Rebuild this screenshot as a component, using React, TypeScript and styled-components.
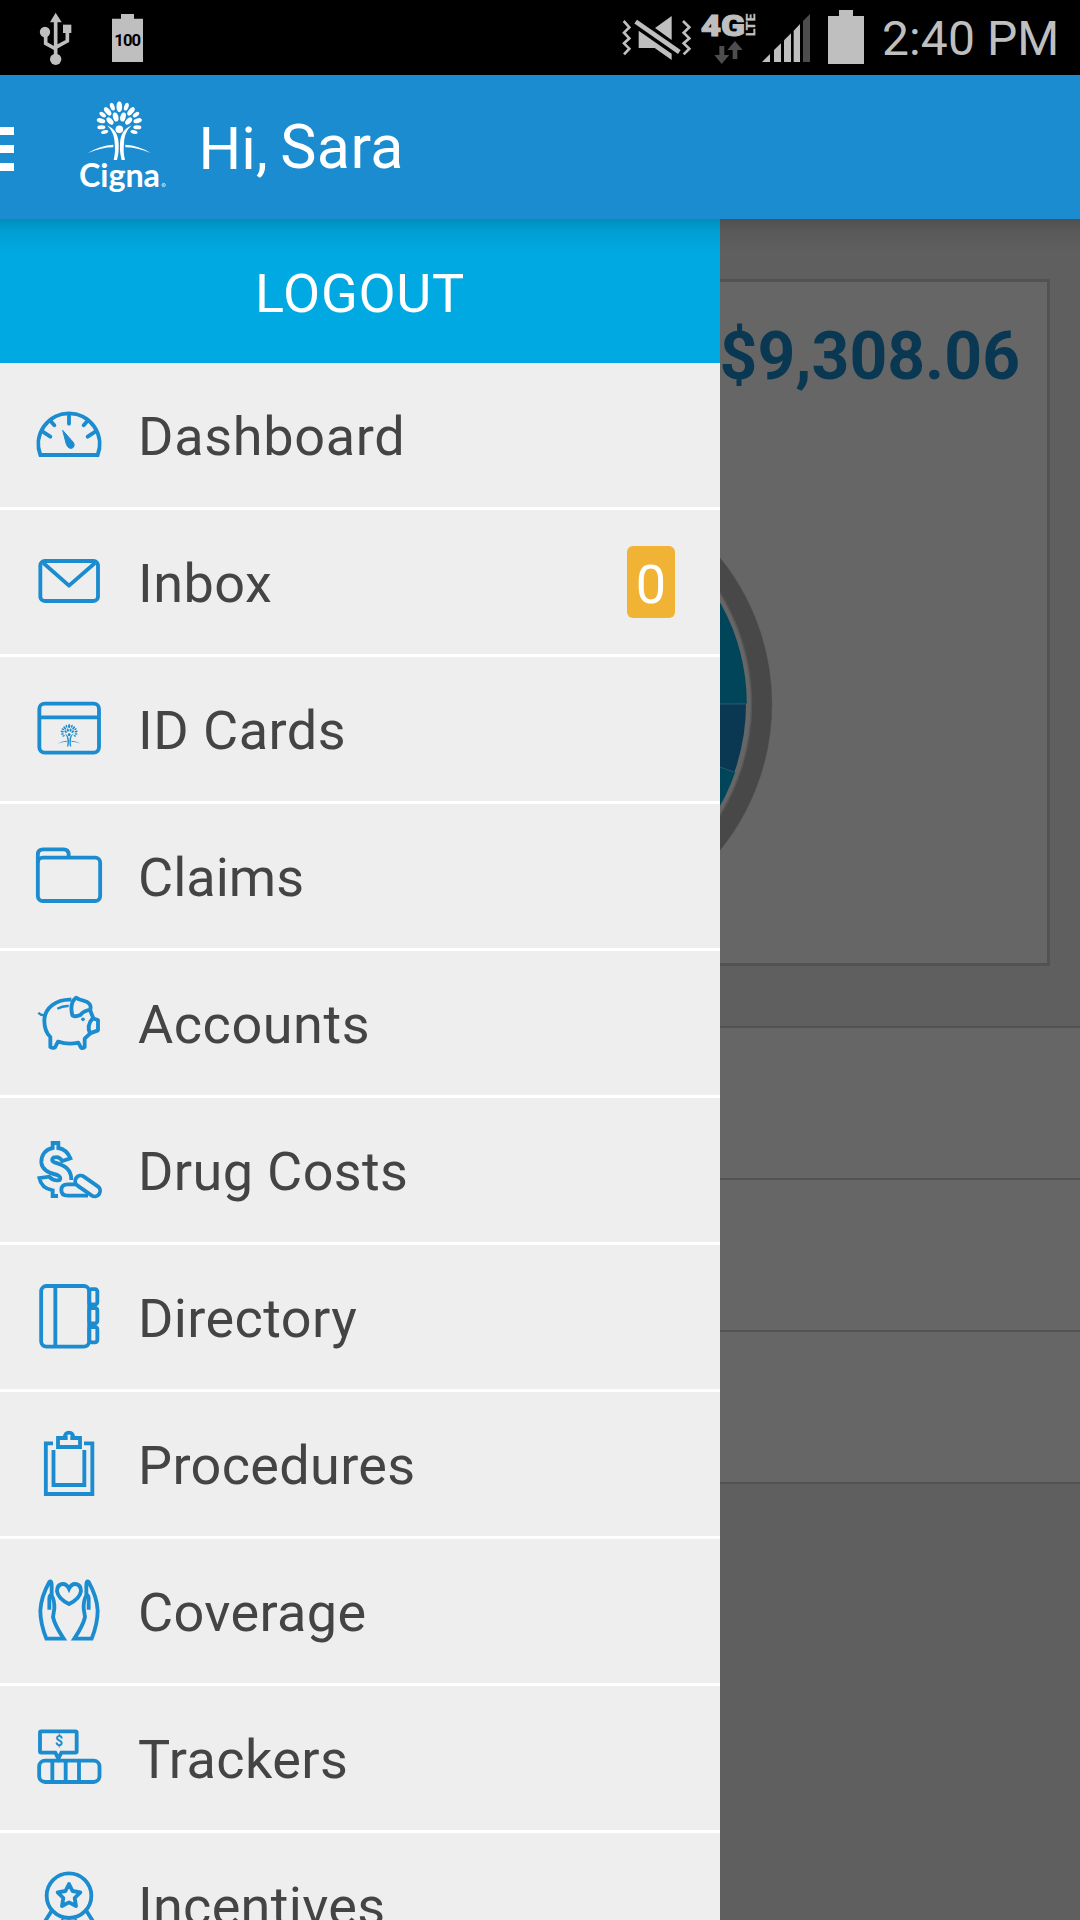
import React from 'react';
import styled, { createGlobalStyle } from 'styled-components';

const GlobalStyle = createGlobalStyle`
  * { box-sizing: border-box; }
  html, body { margin: 0; padding: 0; }
  body { font-family: Roboto, "Noto Sans", sans-serif; background: #000; }
`;

const BLUE = '#1a8ccf';
const GREY = '#bfbfbf';

const Screen = styled.div`
  width: 1080px;
  height: 1920px;
  display: flex;
  flex-direction: column;
  overflow: hidden;
`;

/* ---------- status bar ---------- */

const StatusBar = styled.div`
  flex: none;
  height: 75px;
  padding: 0 22px 0 39px;
  display: flex;
  justify-content: space-between;
  background: #000;
`;

const StatusGroup = styled.div<{ $gap: number }>`
  display: flex;
  gap: ${(p) => p.$gap}px;
`;

const StatusSvg = styled.svg<{ $before?: number }>`
  display: block;
  height: 75px;
  flex: none;
  overflow: visible;
  margin-left: ${(p) => p.$before ?? 0}px;
`;

const Clock = styled.span`
  width: 176px;
  margin-left: 18px;
  font-size: 48px;
  letter-spacing: 0.1px;
  line-height: 75px;
  padding-top: 1px;
  white-space: nowrap;
  color: ${GREY};
`;

const UsbIcon = () => (
  <StatusSvg width={34} viewBox="117 0 102 225" fill={GREY} stroke="none">
    <path d="M167 38 L185 67 H150 Z" />
    <circle cx="135" cy="96" r="15.5" />
    <rect x="189" y="74" width="25" height="25" />
    <circle cx="167" cy="178" r="17" />
    <path d="M167 60 V170 M137 100 V130 L167 147 M202 95 V123 L167 142" fill="none" stroke={GREY} strokeWidth="11" />
  </StatusSvg>
);

const BatteryLevelIcon = () => (
  <StatusSvg width={32} viewBox="336 0 96 225" fill={GREY}>
    <path d="M336 56 H363 V42 H402 V56 H429 V186 H336 Z" />
    <text x="383" y="138" fill="#000" fontSize="50" fontWeight="700" textAnchor="middle" textLength="80">100</text>
  </StatusSvg>
);

const MuteIcon = () => (
  <StatusSvg width={72} viewBox="64 0 216 225" fill={GREY}>
    <path d="M72 63 L89 82 L73 98 L89 115 L73 130 L89 146 L73 163" fill="none" stroke={GREY} strokeWidth="8" />
    <path d="M250 63 L269 82 L252 98 L269 115 L252 130 L269 146 L252 163" fill="none" stroke={GREY} strokeWidth="8" />
    <path d="M216 48 V120 L166 84 Z" />
    <path d="M117 92 L216 161 V180 L165 144 H117 Z" />
    <path d="M108 65 L239 156" stroke={GREY} strokeWidth="14" />
  </StatusSvg>
);

const NetworkIcon = () => (
  <StatusSvg width={54} $before={8} viewBox="305 0 162 225" fill={GREY}>
    <text
      x="304"
      y="107"
      fontSize="90"
      fontWeight="900"
      textLength="133"
      lengthAdjust="spacingAndGlyphs"
      stroke={GREY}
      strokeWidth="3"
    >
      4G
    </text>
    <text
      transform="translate(466 109) rotate(-90)"
      fontSize="36"
      fontWeight="700"
      textLength="68"
      lengthAdjust="spacingAndGlyphs"
      stroke={GREY}
      strokeWidth="1"
    >
      LTE
    </text>
    <path d="M360 138 H375 V165 H390 L367 192 L345 165 H360 Z" fill="#4d4d4d" />
    <path d="M400 177 H414 V150 H430 L407 123 L384 150 H400 Z" fill="#4d4d4d" />
  </StatusSvg>
);

const SignalIcon = () => (
  <StatusSvg width={49} $before={7} viewBox="486 0 147 225" fill={GREY}>
    <path d="M486 186 L510 162 V186 Z" />
    <path d="M522 150 L543 130 V186 H522 Z" />
    <path d="M552 121 L573 100 V186 H552 Z" />
    <path d="M581 92 L600 72 V186 H581 Z" />
    <path d="M609 63 L630 42 V186 H609 Z" fill="#4d4d4d" />
  </StatusSvg>
);

const BatteryIcon = () => (
  <StatusSvg width={36} $before={17} viewBox="684 0 108 225" fill={GREY}>
    <path d="M684 48 H717 V30 H759 V48 H792 V192 H684 Z" />
  </StatusSvg>
);

/* ---------- header ---------- */

const Header = styled.header`
  position: relative;
  z-index: 2;
  flex: none;
  height: 144px;
  display: flex;
  align-items: center;
  background: ${BLUE};

  &::after {
    content: "";
    position: absolute;
    left: 0;
    right: 0;
    top: 100%;
    height: 34px;
    background: linear-gradient(rgba(0, 0, 0, 0.16), rgba(0, 0, 0, 0.06) 38%, rgba(0, 0, 0, 0));
  }
`;

const Burger = styled.div`
  width: 14px;
  padding-top: 4px;
  display: flex;
  flex-direction: column;
  gap: 10px;

  span {
    height: 8px;
    background: #fff;
  }
`;

const LogoSvg = styled.svg`
  display: block;
  margin: 1px 0 0 64px;
`;

const Greeting = styled.h1`
  display: flex;
  margin: 0 0 0 28.5px;
  padding-top: 3px;
  font-size: 60px;
  font-weight: 400;
  line-height: 70px;
  color: #fff;
`;

const FirstName = styled.span`
  margin: -2px 0 2px 12.5px;
  font-size: 61px;
  letter-spacing: 0.4px;
`;

const leaves: [number, number, number, number, number][] = [
  [337, 320, 6.5, 12, -20],
  [323, 334, 7.5, 15, -38],
  [308, 344, 6, 11, -55],
  [303, 362, 7, 13, -75],
  [304, 382, 6, 12, -92],
  [314, 396, 5.5, 11, -105],
  [347, 351, 8, 14, -15],
  [330, 363, 7.5, 13, -42],
];

const TreeHalf = () => (
  <>
    {leaves.map(([cx, cy, rx, ry, a]) => (
      <ellipse key={`${cx}-${cy}`} cx={cx} cy={cy} rx={rx} ry={ry} transform={`rotate(${a} ${cx} ${cy})`} />
    ))}
    <path d="M321 376 C344 386 355 404 356 432 C357 454 354 468 351 480 L341 480 C345 462 346 450 344 430 C343 405 335 390 321 376 Z" />
    <path d="M264 459 Q300 436 340 434 L340 442 Q305 442 264 459 Z" />
  </>
);

const Tree = () => (
  <>
    <ellipse cx="358" cy="320" rx="8.5" ry="16.5" />
    <circle cx="358" cy="388" r="11.5" />
    <TreeHalf />
    <g transform="translate(716 0) scale(-1 1)">
      <TreeHalf />
    </g>
  </>
);

const Logo = () => (
  <LogoSvg width={92} height={96} viewBox="234 300 276 288" fill="#fff">
    <Tree />
    <text
      x="237"
      y="561"
      fontFamily='Lato, "Noto Sans", sans-serif'
      fontWeight="700"
      fontSize="97"
      textLength="243"
      lengthAdjust="spacing"
    >
      Cigna
    </text>
    <circle cx="491" cy="555" r="5" fill="none" stroke="#fff" strokeOpacity="0.8" strokeWidth="2.5" />
    <circle cx="491" cy="555" r="2" fillOpacity="0.8" />
  </LogoSvg>
);

/* ---------- body ---------- */

const Body = styled.main`
  flex: 1;
  min-height: 0;
  display: grid;
  grid-template-columns: 720px 360px;
  grid-template-rows: 1701px;
  overflow: hidden;
`;

const Page = styled.section`
  grid-column: 1 / 3;
  grid-row: 1;
  display: flex;
  flex-direction: column;
  background: #5f5f5f;
`;

const Card = styled.div`
  flex: none;
  height: 687px;
  margin: 60px 30px 60px;
  padding: 37px 27px 0;
  border: 3px solid #525252;
  background: #666;
  display: flex;
  flex-direction: column;
`;

const Amount = styled.div`
  text-align: right;
  font-size: 66px;
  font-weight: 700;
  line-height: 76px;
  color: #0a3853;
`;

const ChartSvg = styled.svg`
  display: block;
  align-self: center;
  margin-top: 73.5px;
`;

const ListRow = styled.div`
  flex: none;
  height: 152px;
  border-top: 2px solid #525252;
  background: #666;

  &:last-child {
    height: 154px;
    border-bottom: 2px solid #525252;
  }
`;

const rad = (deg: number) => (deg * Math.PI) / 180;
const slice = (from: number, to: number, r: number) => {
  const x1 = 235 + r * Math.cos(rad(from));
  const y1 = 235 + r * Math.sin(rad(from));
  const x2 = 235 + r * Math.cos(rad(to));
  const y2 = 235 + r * Math.sin(rad(to));
  return `M235 235 L${x1} ${y1} A${r} ${r} 0 ${to - from > 180 ? 1 : 0} 1 ${x2} ${y2} Z`;
};

const SpendChart = () => (
  <ChartSvg width={470} height={470} viewBox="0 0 470 470">
    <circle cx="235" cy="235" r="221.5" fill="none" stroke="#575757" strokeWidth="21.5" />
    <circle cx="235" cy="235" r="222" fill="none" stroke="#484848" strokeWidth="19.5" />
    <path d={slice(19.3, 359.9, 206.8)} fill="#00455a" />
    <path d={slice(0, 19.3, 206)} fill="#0a3853" />
    <path d={`M235 235 H441 M235 235 L${235 + 206 * Math.cos(rad(19.3))} ${235 + 206 * Math.sin(rad(19.3))}`} stroke="#22566a" strokeWidth="1" />
  </ChartSvg>
);

/* ---------- drawer ---------- */

const Drawer = styled.nav`
  grid-column: 1;
  grid-row: 1;
  z-index: 1;
  display: flex;
  flex-direction: column;
  overflow: hidden;
  background: #eee;
`;

const Logout = styled.button`
  flex: none;
  height: 144px;
  padding: 4px 0 0;
  border: 0;
  background: #00a9e1;
  color: #fff;
  font-family: inherit;
  font-size: 54px;
  font-weight: 400;
  letter-spacing: 0.7px;
`;

const MenuItem = styled.div`
  flex: none;
  height: 147px;
  padding: 0 45px 0 33px;
  display: flex;
  align-items: center;
  border-bottom: 3px solid #fff;
  background: #eee;
`;

const MenuIcon = styled.svg`
  flex: none;
  width: 72px;
  height: 72px;
  fill: none;
  stroke: ${BLUE};
  stroke-width: 11.5px;
`;

const MenuLabel = styled.span<{ $tracking: number }>`
  flex: 1;
  margin-left: 33px;
  padding-top: 4px;
  font-size: 54px;
  line-height: 64px;
  letter-spacing: ${(p) => p.$tracking}px;
  color: #444;
`;

const Badge = styled.span`
  width: 48px;
  height: 72px;
  padding-top: 3px;
  border-radius: 6px;
  background: #f1b335;
  color: #fff;
  font-size: 54px;
  line-height: 72px;
  text-align: center;
`;

const Hand = () => (
  <>
    <path d="M139 1196 Q121 1150 121 1112 Q123 1070 148 1026 Q155 1020 155 1036 V1066 Q164 1082 163 1106 L159 1131 Q164 1155 191 1196 Z" />
    <path d="M148 1109 V1075 Q149 1066 155 1064" />
  </>
);

type Item = { label: string; tracking: number; top: number; icon: React.ReactNode; badge?: string };

const items: Item[] = [
  {
    label: 'Dashboard',
    tracking: 0.7,
    top: 117,
    icon: (
      <>
        <path d="M121 285 A92 92 0 1 1 293 285 Z" />
        <path d="M207 165 V191 M128 215 L151 230 M151 182 L163 196 M286 215 L263 230 M263 182 L251 196" strokeLinecap="round" />
        <path d="M188 211 L219 246 Q225 252 221 261 Q217 266 210 265 Q202 262 199 253 Z" fill={BLUE} strokeWidth="3" strokeLinejoin="round" />
      </>
    ),
  },
  {
    label: 'Inbox',
    tracking: 0.5,
    top: 558,
    badge: '0',
    icon: (
      <>
        <rect x="121" y="603" width="173" height="120" rx="13" />
        <path d="M130 609 L207 677 L285 609" strokeLinejoin="round" />
      </>
    ),
  },
  {
    label: 'ID Cards',
    tracking: 0.5,
    top: 999,
    icon: (
      <>
        <rect x="118" y="1031" width="179" height="147" rx="16" />
        <path d="M118 1072 H297" />
        <g transform="translate(71.5 977) scale(0.38)" fill={BLUE} stroke="none">
          <Tree />
        </g>
      </>
    ),
  },
  {
    label: 'Claims',
    tracking: 0,
    top: 120,
    icon: (
      <>
        <rect x="113.5" y="173" width="187" height="130" rx="15" />
        <path d="M113.5 188 V164 Q113.5 148 130 148 H190 Q206 148 206 164 V172" />
      </>
    ),
  },
  {
    label: 'Accounts',
    tracking: 0.55,
    top: 561,
    icon: (
      <g strokeLinejoin="round">
        <path d="M214 599 C168 597 133 625 133 662 C133 686 141 701 151 711 V741 Q158 746 165 742 L174 725 Q205 735 235 728 L243 743 Q250 746 254 741 V716 L270 701" />
        <path d="M278 655 L294 660 V691 L270 700 Q259 678 278 655 Z" />
        <path d="M270 630 L280 655" />
        <path d="M228 593 Q238 600 250 602 Q276 608 271 629 Q250 633 241 645 Q226 652 217 646 Q208 608 228 593 Z" />
        <path d="M172 626 Q188 617 206 618" strokeWidth="7" />
        <path d="M115 638 Q123 647 134 645" strokeWidth="7" />
        <circle cx="249" cy="658" r="5.5" fill={BLUE} stroke="none" />
      </g>
    ),
  },
  {
    label: 'Drug Costs',
    tracking: 0.38,
    top: 1002,
    icon: (
      <>
        <path d="M214 1140 C214 1108 196 1096 163 1087 Q151 1080 160 1073 Q177 1067 187 1083 L211 1075 Q200 1048 175 1044 V1029 H158 V1044 C132 1049 123 1070 124 1088 C127 1112 148 1120 172 1125 Q185 1131 179 1140 Q162 1145 147 1130 L118 1134 Q124 1165 158 1171 V1188 H174" />
        <path d="M264 1187 H203 Q184 1187 184 1170 Q184 1153 203 1153 H230" />
        <rect x="221" y="1141.5" width="84" height="33" rx="16.5" transform="rotate(35 263 1158)" />
      </>
    ),
  },
  {
    label: 'Directory',
    tracking: 0.4,
    top: 123,
    icon: (
      <>
        <rect x="123.5" y="138" width="144" height="182" rx="16" />
        <path d="M166 138 V320" />
        <rect x="268" y="147.5" width="24" height="46" rx="7" />
        <rect x="268" y="204" width="24" height="46" rx="7" />
        <rect x="268" y="261" width="24" height="46" rx="7" />
      </>
    ),
  },
  {
    label: 'Procedures',
    tracking: 0.35,
    top: 564,
    icon: (
      <>
        <path d="M159 610 H137.5 V762 H277 V610 H252" />
        <path d="M160.5 630 V735 H253 V630" />
        <path d="M174 594 H194 Q195 578 207 578 Q219 578 220 594 H240 V621 H174 Z" />
        <path d="M196 594 H203 M211 594 H218" />
      </>
    ),
  },
  {
    label: 'Coverage',
    tracking: 0.35,
    top: 1005,
    icon: (
      <>
        <path d="M207 1046 Q200 1031 187 1032 Q171 1035 171 1053 Q174 1076 207 1092 Q240 1076 243 1053 Q243 1035 227 1032 Q214 1031 207 1046 Z" />
        <Hand />
        <g transform="translate(414 0) scale(-1 1)">
          <Hand />
        </g>
      </>
    ),
  },
  {
    label: 'Trackers',
    tracking: 0.45,
    top: 186,
    icon: (
      <>
        <path d="M166 278 H124 Q120 278 120 274 V218 Q120 214 124 214 H226 Q230 214 230 218 V274 Q230 278 226 278 H184 L175 296 Z" />
        <text x="177" y="259" fill={BLUE} stroke="none" fontSize="42" fontWeight="700" textAnchor="middle">$</text>
        <rect x="117.5" y="302" width="181" height="64" rx="18" />
        <path d="M157 302 V366 M197 302 V366 M237 302 V366" />
      </>
    ),
  },
  {
    label: 'Incentives',
    tracking: 0.3,
    top: 627,
    icon: (
      <>
        <circle cx="207" cy="707" r="67" />
        <path d="M207 672 L217.5 693 L241 697 L224 714 L228 738 L207 727 L186 738 L190 714 L173 697 L196.5 693 Z" strokeLinejoin="round" />
        <path d="M156 751 L121 806 H150 L165 835 L190 778 M258 751 L293 806 H264 L249 835 L224 778" />
      </>
    ),
  },
];

export default function App() {
  return (
    <Screen>
      <GlobalStyle />
      <StatusBar>
        <StatusGroup $gap={39}>
          <UsbIcon />
          <BatteryLevelIcon />
        </StatusGroup>
        <StatusGroup $gap={0}>
          <MuteIcon />
          <NetworkIcon />
          <SignalIcon />
          <BatteryIcon />
          <Clock>2:40 PM</Clock>
        </StatusGroup>
      </StatusBar>
      <Header>
        <Burger>
          <span />
          <span />
          <span />
        </Burger>
        <Logo />
        <Greeting>
          <span>Hi,</span>
          <FirstName>Sara</FirstName>
        </Greeting>
      </Header>
      <Body>
        <Page>
          <Card>
            <Amount>$9,308.06</Amount>
            <SpendChart />
          </Card>
          <ListRow />
          <ListRow />
          <ListRow />
        </Page>
        <Drawer>
          <Logout>LOGOUT</Logout>
          {items.map((item) => (
            <MenuItem key={item.label}>
              <MenuIcon viewBox={`99 ${item.top} 216 216`}>{item.icon}</MenuIcon>
              <MenuLabel $tracking={item.tracking}>{item.label}</MenuLabel>
              {item.badge !== undefined && <Badge>{item.badge}</Badge>}
            </MenuItem>
          ))}
        </Drawer>
      </Body>
    </Screen>
  );
}
